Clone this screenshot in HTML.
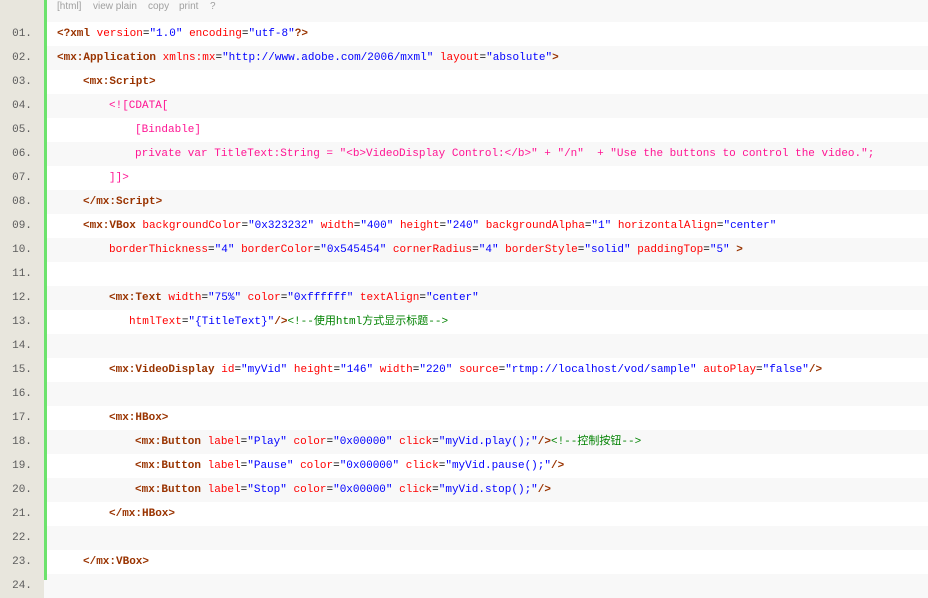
<!DOCTYPE html>
<html><head><meta charset="utf-8"><style>
body{margin:0;width:928px;height:580px;overflow:hidden;background:#fff;font-family:"Liberation Mono","Noto Sans CJK SC",monospace;font-size:11px;}
.g{position:absolute;left:0;top:0;width:44px;height:580px;border-right:3px solid #6ce26c;}
.gh{position:absolute;left:0;top:0;width:44px;height:22px;background:#e8e6dd;}
.hd{position:absolute;left:47px;top:0;width:881px;height:22px;background:#f8f8f8;font-family:"Liberation Sans",sans-serif;font-size:10px;color:#a0a0a0;line-height:14px;}
.hd span{position:absolute;top:0}
.r{position:absolute;left:0;width:928px;height:24px;line-height:24px;white-space:pre;}
.r.e{background:#f8f8f8}
.n{position:absolute;left:0;width:44px;text-align:center;color:#5c5c5c;background:#e8e6dd;}
.c{position:absolute;left:57px;}
.t{color:#993300;font-weight:bold}
.a{color:#ff0000}
.v{color:#0000ff}
.k{color:#ff1493}
.m{color:#008200}
</style></head><body>
<div class="gh"></div>
<div class="hd"><span style="left:10px">[html]</span><span style="left:46px">view plain</span><span style="left:101px">copy</span><span style="left:132px">print</span><span style="left:163px">?</span></div>
<div class="r" style="top:22px"><span class="n">01.</span><span class="c"><span class="t">&lt;?xml</span> <span class="a">version</span>=<span class="v">"1.0"</span> <span class="a">encoding</span>=<span class="v">"utf-8"</span><span class="t">?&gt;</span></span></div>
<div class="r e" style="top:46px"><span class="n">02.</span><span class="c"><span class="t">&lt;mx:Application</span> <span class="a">xmlns:mx</span>=<span class="v">"http://www.adobe.com/2006/mxml"</span> <span class="a">layout</span>=<span class="v">"absolute"</span><span class="t">&gt;</span></span></div>
<div class="r" style="top:70px"><span class="n">03.</span><span class="c" style="left:83px"><span class="t">&lt;mx:Script&gt;</span></span></div>
<div class="r e" style="top:94px"><span class="n">04.</span><span class="c k" style="left:109px">&lt;![CDATA[</span></div>
<div class="r" style="top:118px"><span class="n">05.</span><span class="c k" style="left:135px">[Bindable]</span></div>
<div class="r e" style="top:142px"><span class="n">06.</span><span class="c k" style="left:135px">private var TitleText:String = "&lt;b&gt;VideoDisplay Control:&lt;/b&gt;" + "/n"  + "Use the buttons to control the video.";</span></div>
<div class="r" style="top:166px"><span class="n">07.</span><span class="c k" style="left:109px">]]&gt;</span></div>
<div class="r e" style="top:190px"><span class="n">08.</span><span class="c" style="left:83px"><span class="t">&lt;/mx:Script&gt;</span></span></div>
<div class="r" style="top:214px"><span class="n">09.</span><span class="c" style="left:83px"><span class="t">&lt;mx:VBox</span> <span class="a">backgroundColor</span>=<span class="v">"0x323232"</span> <span class="a">width</span>=<span class="v">"400"</span> <span class="a">height</span>=<span class="v">"240"</span> <span class="a">backgroundAlpha</span>=<span class="v">"1"</span> <span class="a">horizontalAlign</span>=<span class="v">"center"</span></span></div>
<div class="r e" style="top:238px"><span class="n">10.</span><span class="c" style="left:109px"><span class="a">borderThickness</span>=<span class="v">"4"</span> <span class="a">borderColor</span>=<span class="v">"0x545454"</span> <span class="a">cornerRadius</span>=<span class="v">"4"</span> <span class="a">borderStyle</span>=<span class="v">"solid"</span> <span class="a">paddingTop</span>=<span class="v">"5"</span> <span class="t">&gt;</span></span></div>
<div class="r" style="top:262px"><span class="n">11.</span></div>
<div class="r e" style="top:286px"><span class="n">12.</span><span class="c" style="left:109px"><span class="t">&lt;mx:Text</span> <span class="a">width</span>=<span class="v">"75%"</span> <span class="a">color</span>=<span class="v">"0xffffff"</span> <span class="a">textAlign</span>=<span class="v">"center"</span></span></div>
<div class="r" style="top:310px"><span class="n">13.</span><span class="c" style="left:129px"><span class="a">htmlText</span>=<span class="v">"{TitleText}"</span><span class="t">/&gt;</span><span class="m">&lt;!--使用html方式显示标题--&gt;</span></span></div>
<div class="r e" style="top:334px"><span class="n">14.</span></div>
<div class="r" style="top:358px"><span class="n">15.</span><span class="c" style="left:109px"><span class="t">&lt;mx:VideoDisplay</span> <span class="a">id</span>=<span class="v">"myVid"</span> <span class="a">height</span>=<span class="v">"146"</span> <span class="a">width</span>=<span class="v">"220"</span> <span class="a">source</span>=<span class="v">"rtmp://localhost/vod/sample"</span> <span class="a">autoPlay</span>=<span class="v">"false"</span><span class="t">/&gt;</span></span></div>
<div class="r e" style="top:382px"><span class="n">16.</span></div>
<div class="r" style="top:406px"><span class="n">17.</span><span class="c" style="left:109px"><span class="t">&lt;mx:HBox&gt;</span></span></div>
<div class="r e" style="top:430px"><span class="n">18.</span><span class="c" style="left:135px"><span class="t">&lt;mx:Button</span> <span class="a">label</span>=<span class="v">"Play"</span> <span class="a">color</span>=<span class="v">"0x00000"</span> <span class="a">click</span>=<span class="v">"myVid.play();"</span><span class="t">/&gt;</span><span class="m">&lt;!--控制按钮--&gt;</span></span></div>
<div class="r" style="top:454px"><span class="n">19.</span><span class="c" style="left:135px"><span class="t">&lt;mx:Button</span> <span class="a">label</span>=<span class="v">"Pause"</span> <span class="a">color</span>=<span class="v">"0x00000"</span> <span class="a">click</span>=<span class="v">"myVid.pause();"</span><span class="t">/&gt;</span></span></div>
<div class="r e" style="top:478px"><span class="n">20.</span><span class="c" style="left:135px"><span class="t">&lt;mx:Button</span> <span class="a">label</span>=<span class="v">"Stop"</span> <span class="a">color</span>=<span class="v">"0x00000"</span> <span class="a">click</span>=<span class="v">"myVid.stop();"</span><span class="t">/&gt;</span></span></div>
<div class="r" style="top:502px"><span class="n">21.</span><span class="c" style="left:109px"><span class="t">&lt;/mx:HBox&gt;</span></span></div>
<div class="r e" style="top:526px"><span class="n">22.</span></div>
<div class="r" style="top:550px"><span class="n">23.</span><span class="c" style="left:83px"><span class="t">&lt;/mx:VBox&gt;</span></span></div>
<div class="r e" style="top:574px"><span class="n">24.</span></div>
<div class="g"></div>
</body></html>
